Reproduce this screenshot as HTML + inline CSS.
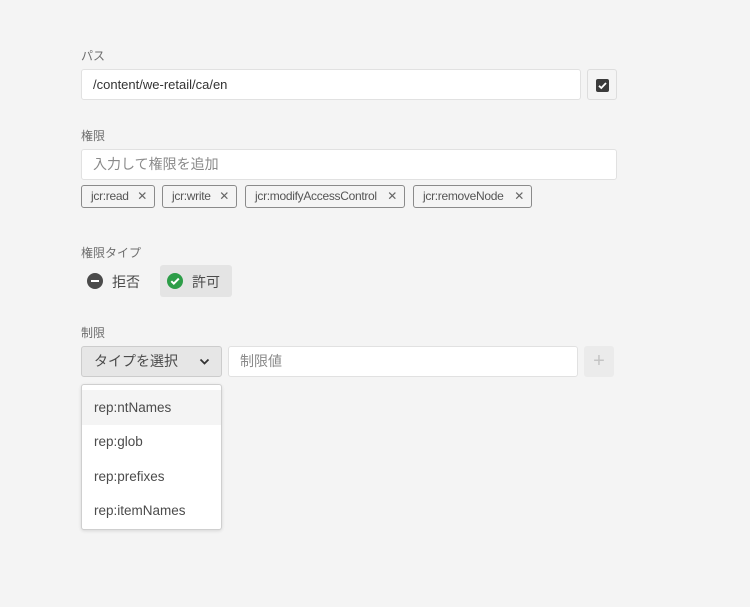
<!DOCTYPE html>
<html><head><meta charset="utf-8"><style>
body{margin:0;width:750px;height:607px;background:#f4f4f4;font-family:"Liberation Sans","Noto Sans CJK JP",sans-serif;position:relative;overflow:hidden;color:#4b4b4b}
.a{position:absolute}
.lbl{font-size:12px;color:#6e6e6e}
.inp{background:#fff;border:1px solid #e1e1e1;border-radius:3px;box-sizing:border-box;font-size:13px;line-height:29px;padding-left:11px}
.tag{border:1px solid #8a8a8a;border-radius:3px;height:23px;box-sizing:border-box;font-size:12px;line-height:21px;padding-left:9px;color:#555;background:#f4f4f4;letter-spacing:-0.3px}
.tag span{position:absolute;right:7px;font-size:12px;color:#666}
.it{position:absolute;left:0;width:139px;height:35px;line-height:35px;padding-left:12px;box-sizing:border-box;font-size:13.5px;color:#4b4b4b}
</style></head><body>
<div class="a lbl" style="left:81px;top:47px">パス</div>
<div class="a inp" style="left:81px;top:69px;width:500px;height:31px;color:#333">/content/we-retail/ca/en</div>
<div class="a" style="left:587px;top:69px;width:30px;height:31px;border:1px solid #ddd;border-radius:3px;box-sizing:border-box;background:#f4f4f4"><div style="position:absolute;left:8px;top:9px;width:13px;height:13px;background:#3b3b3b;border-radius:2px"><svg width="13" height="13" viewBox="0 0 13 13"><path d="M3 6.8l2.3 2.2L10 4" stroke="#fff" stroke-width="1.8" fill="none"/></svg></div></div>
<div class="a lbl" style="left:81px;top:127px">権限</div>
<div class="a inp" style="left:81px;top:149px;width:536px;height:31px;color:#8a8a8a;font-size:14px">入力して権限を追加</div>
<div class="a tag" style="left:81px;top:185px;width:74px">jcr:read<span>✕</span></div>
<div class="a tag" style="left:162px;top:185px;width:75px">jcr:write<span>✕</span></div>
<div class="a tag" style="left:245px;top:185px;width:160px">jcr:modifyAccessControl<span>✕</span></div>
<div class="a tag" style="left:413px;top:185px;width:119px">jcr:removeNode<span>✕</span></div>
<div class="a lbl" style="left:81px;top:244px">権限タイプ</div>
<div class="a" style="left:87px;top:273px;width:16px;height:16px;border-radius:50%;background:#4b4b4b"><div style="position:absolute;left:4px;top:7px;width:8px;height:2px;background:#fff"></div></div>
<div class="a" style="left:112px;top:272px;font-size:14px;color:#4b4b4b">拒否</div>
<div class="a" style="left:160px;top:265px;width:72px;height:32px;background:#e4e4e4;border-radius:3px"></div>
<div class="a" style="left:167px;top:273px;width:16px;height:16px;border-radius:50%;background:#2d9d48"><svg width="16" height="16" viewBox="0 0 16 16"><path d="M4.3 8.2l2.5 2.4L11.8 5.6" stroke="#fff" stroke-width="2" fill="none"/></svg></div>
<div class="a" style="left:192px;top:272px;font-size:14px;color:#4b4b4b">許可</div>
<div class="a lbl" style="left:81px;top:324px">制限</div>
<div class="a" style="left:81px;top:346px;width:141px;height:31px;background:#e6e6e6;border:1px solid #ccc;border-radius:3px;box-sizing:border-box;font-size:14px;line-height:29px;padding-left:12px;color:#4b4b4b">タイプを選択<svg style="position:absolute;left:117px;top:10px" width="11" height="9" viewBox="0 0 11 9"><path d="M1.5 2.5l4 4 4-4" stroke="#333" stroke-width="1.8" fill="none"/></svg></div>
<div class="a inp" style="left:228px;top:346px;width:350px;height:31px;color:#8a8a8a;font-size:14px">制限値</div>
<div class="a" style="left:584px;top:346px;width:30px;height:31px;background:#ebebeb;border-radius:3px;color:#c4c4c4;font-size:20px;text-align:center;line-height:30px">+</div>
<div class="a" style="left:81px;top:384px;width:141px;height:146px;background:#fff;border:1px solid #cfcfcf;border-radius:3px;box-sizing:border-box;box-shadow:0 1px 3px rgba(0,0,0,.12)">
<div class="it" style="top:5px;background:#f4f4f4">rep:ntNames</div>
<div class="it" style="top:39px">rep:glob</div>
<div class="it" style="top:74px">rep:prefixes</div>
<div class="it" style="top:108px">rep:itemNames</div>
</div>
</body></html>
